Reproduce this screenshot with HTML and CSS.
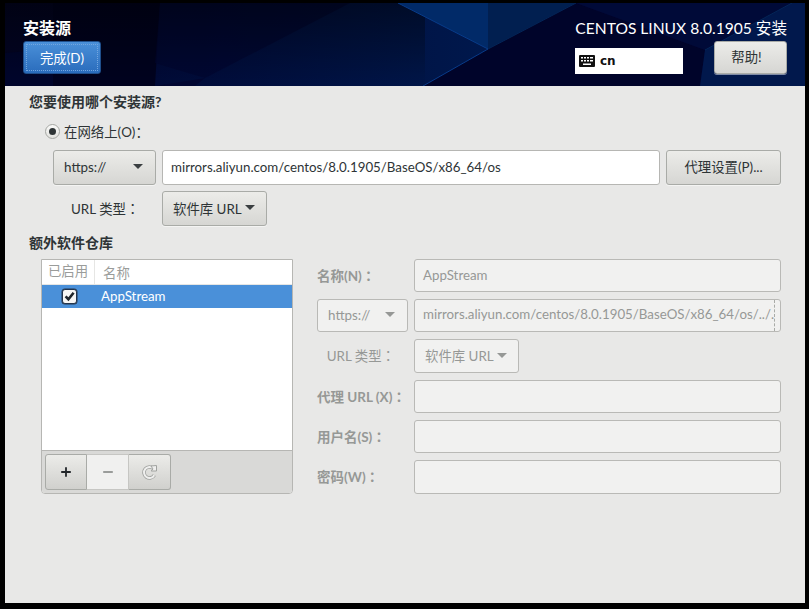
FILE: index.html
```html
<!DOCTYPE html>
<html lang="zh-CN">
<head>
<meta charset="utf-8">
<title>安装源</title>
<link rel="stylesheet" href="styles.css">
</head>
<body>
<div class="frame">
  <header class="topbar">
    <svg class="topbar-art" viewBox="0 0 800 83" preserveAspectRatio="none" aria-hidden="true">
      <defs>
        <linearGradient id="fade" x1="0" y1="0" x2="0" y2="1">
          <stop offset="0" stop-color="#000" stop-opacity=".45"/>
          <stop offset="1" stop-color="#000" stop-opacity="0"/>
        </linearGradient>
        <linearGradient id="mid" x1="0" y1="0" x2="1" y2="0">
          <stop offset="0" stop-color="#000a38"/>
          <stop offset="1" stop-color="#00184c"/>
        </linearGradient>
      </defs>
      <rect width="160" height="83" fill="#00052c"/>
      <polygon points="0,0 48,0 48,46 0,50" fill="#020424"/>
      <polygon points="48,0 155,0 180,40 150,83 48,83" fill="#00021f"/>
      <polygon points="155,0 393,0 483,46 418,83 190,83 200,75 150,83" fill="url(#mid)"/>
      <polygon points="155,0 345,0 200,75 150,60" fill="#000530" opacity=".7"/>
      <rect y="0" width="420" height="83" fill="url(#fade)"/>
      <polygon points="393,0 483,0 483,46" fill="#012a68"/>
      <polygon points="483,0 571,0 483,46" fill="#011f50"/>
      <polygon points="571,0 700,47 695,83 418,83 483,46" fill="#00042a"/>
      <polygon points="571,0 787,0 700,47" fill="#000a38"/>
      <polygon points="700,47 787,0 800,0 800,83 695,83" fill="#01184c"/>
      <path d="M393 0L483 46L418 83" fill="none" stroke="#083c8a" stroke-width="1"/>
      <path d="M483 46L571 0M700 47L787 0" fill="none" stroke="#042658" stroke-width="1"/>
    </svg>
    <div class="topbar-left">
      <h1 class="spoke-title">安装源</h1>
      <button class="btn-done"><span class="btn-done-inner">完成(D)</span></button>
    </div>
    <div class="topbar-right">
      <div class="product">CENTOS LINUX 8.0.1905 安装</div>
      <div class="topbar-controls">
        <div class="layout-box">
          <svg class="kbd-icon" viewBox="0 0 16 12" aria-hidden="true">
            <rect width="16" height="12" rx="1" fill="#111"/>
            <g fill="#fff">
              <rect x="2" y="2" width="2" height="1.5"/><rect x="5" y="2" width="2" height="1.5"/><rect x="8" y="2" width="2" height="1.5"/><rect x="11" y="2" width="3" height="1.5"/>
              <rect x="2" y="5" width="2" height="1.5"/><rect x="5" y="5" width="2" height="1.5"/><rect x="8" y="5" width="2" height="1.5"/><rect x="11" y="5" width="3" height="1.5"/>
              <rect x="4" y="8.5" width="8" height="1.5"/>
            </g>
          </svg>
          <span class="layout-name">cn</span>
        </div>
        <button class="btn btn-help">帮助!</button>
      </div>
    </div>
  </header>

  <main class="content">
    <h2 class="section-title section-first">您要使用哪个安装源?</h2>
    <label class="radio-row"><span class="radio"><span class="radio-dot"></span></span><span>在网络上(O)<span class="colon">：</span></span></label>

    <div class="url-row">
      <div class="btn select select-proto"><span>https://</span><span class="caret"></span></div>
      <div class="entry entry-url">mirrors.aliyun.com/centos/8.0.1905/BaseOS/x86_64/os</div>
      <button class="btn btn-proxy">代理设置(P)...</button>
    </div>

    <div class="type-row">
      <span class="type-label">URL 类型<span class="colon">：</span></span>
      <div class="btn select select-type"><span>软件库 URL</span><span class="caret"></span></div>
    </div>

    <h2 class="section-title section-repo">额外软件仓库</h2>

    <div class="repo-area">
      <div class="repo-panel">
        <div class="repo-list">
          <div class="repo-head"><span class="col-enabled">已启用</span><span class="col-name">名称</span></div>
          <div class="repo-row">
            <span class="col-check"><span class="check">
              <svg viewBox="0 0 13 13" aria-hidden="true"><path d="M2.6 6.4 L5.4 9.2 L10.6 2.8" fill="none" stroke="#20262c" stroke-width="2.6"/></svg>
            </span></span>
            <span class="repo-name">AppStream</span>
          </div>
        </div>
        <div class="repo-toolbar">
          <div class="tool-group">
            <button class="tool tool-add">
              <svg viewBox="0 0 12 12" aria-hidden="true"><path d="M6 1.2V10.8M1.2 6H10.8" stroke="#22262a" stroke-width="1.8" fill="none"/></svg>
            </button>
            <button class="tool tool-remove">
              <svg viewBox="0 0 12 12" aria-hidden="true"><path d="M1.2 6H10.8" stroke="#9a9c9a" stroke-width="1.8" fill="none"/></svg>
            </button>
            <button class="tool tool-refresh">
              <svg viewBox="0 0 16 16" aria-hidden="true">
                <path d="M11.4 4.6A5.5 5.5 0 1 0 12.3 11.2" fill="none" stroke="#a0a29f" stroke-width="3.6"/>
                <path d="M11.4 4.6A5.5 5.5 0 1 0 12.3 11.2" fill="none" stroke="#efefee" stroke-width="2"/>
                <path d="M9 2L14.5 1.5V7H9.2L11 5Z" fill="#efefee" stroke="#a0a29f" stroke-width="1"/>
              </svg>
            </button>
          </div>
        </div>
      </div>

      <div class="repo-form">
        <span class="form-label">名称(N)<span class="colon">：</span></span>
        <div class="entry entry-off">AppStream</div>

        <div class="btn select select-off select-proto-off"><span>https://</span><span class="caret caret-off"></span></div>
        <div class="entry entry-off entry-clip"><span class="clip-text">mirrors.aliyun.com/centos/8.0.1905/BaseOS/x86_64/os/../.</span></div>

        <span class="form-label form-type">URL 类型<span class="colon">：</span></span>
        <div class="type-cell"><div class="btn select select-off select-type-off"><span>软件库 URL</span><span class="caret caret-off"></span></div></div>

        <span class="form-label">代理 URL (X)<span class="colon">：</span></span>
        <div class="entry entry-off"></div>

        <span class="form-label">用户名(S)<span class="colon">：</span></span>
        <div class="entry entry-off"></div>

        <span class="form-label">密码(W)<span class="colon">：</span></span>
        <div class="entry entry-off"></div>
      </div>
    </div>
  </main>
</div>
</body>
</html>
```
FILE: styles.css
```css
* { box-sizing: border-box; }
html, body { margin: 0; padding: 0; height: 100%; background: #000; overflow: hidden; }
body {
  font-family: Lato, "Noto Sans CJK SC", sans-serif;
  font-size: 13.4px;
  color: #2e3436;
}
button { font: inherit; color: inherit; margin: 0; }
h1, h2 { margin: 0; }
.colon { font-family: "Noto Sans CJK TC", sans-serif; }

.frame {
  width: 800px;
  height: 600px;
  margin: 3px 0 0 5px;
  background: #e8e8e7;
  display: flex;
  flex-direction: column;
}

/* Header */
.topbar {
  position: relative;
  height: 83px;
  flex: none;
  background: #010632;
  display: flex;
  justify-content: space-between;
  padding: 15px 18px 0 18px;
  overflow: hidden;
}
.topbar-art { position: absolute; left: 0; top: 0; width: 100%; height: 100%; }
.topbar-left, .topbar-right { position: relative; }
.spoke-title {
  font-size: 16px;
  font-weight: 700;
  line-height: 20px;
  color: #fff;
  margin-bottom: 3px;
}
.btn-done {
  display: block;
  width: 78px;
  height: 33px;
  padding: 2px 2px;
  border: 1px solid #1f4f8c;
  border-radius: 3px;
  background: linear-gradient(#4a90d9, #2a6cbc);
  color: #fff;
}
.btn-done-inner {
  display: flex;
  align-items: center;
  justify-content: center;
  height: 100%;
  border: 1px dotted #74a6df;
  font-size: 13.4px;
  padding-bottom: 2px;
}
.topbar-right { width: 212px; display: flex; flex-direction: column; align-items: flex-end; }
.product {
  font-size: 15.6px;
  line-height: 20px;
  color: #fff;
  margin-bottom: 3px;
  white-space: nowrap;
}
.topbar-controls { display: flex; align-items: flex-start; gap: 31px; width: 212px; }
.layout-box {
  margin-top: 7px;
  width: 108px;
  height: 26px;
  background: #fff;
  display: flex;
  align-items: center;
  gap: 5px;
  padding-left: 4px;
  color: #111;
}
.kbd-icon { width: 16px; height: 12px; flex: none; }
.layout-name { font-size: 12px; font-weight: 700; font-family: "DejaVu Sans", sans-serif; }
.btn-help { width: 73px; height: 33px; padding: 0 8px 3px 0; }

/* Generic */
.btn {
  border: 1px solid #a9aba7;
  border-radius: 3px;
  background: linear-gradient(#ecece9, #d6d6d3);
  color: #2e3436;
  font-size: 13.4px;
  box-shadow: 0 1px 0 rgba(255,255,255,.5);
}
.select { display: flex; align-items: center; justify-content: space-between; }
.caret {
  width: 0;
  height: 0;
  border-left: 5px solid transparent;
  border-right: 5px solid transparent;
  border-top: 5px solid #3a3f41;
}
.entry {
  border: 1px solid #b6b6b3;
  border-radius: 3px;
  background: #fff;
  display: flex;
  align-items: center;
  padding: 0 8px 2px;
  font-size: 13.3px;
  white-space: nowrap;
}

/* Content */
.content { flex: 1; display: flex; flex-direction: column; padding: 0 24px; }
.section-title { font-size: 14px; font-weight: 700; line-height: 18px; color: #2e3436; }
.section-first { margin-top: 7px; }
.radio-row { display: flex; align-items: center; gap: 4px; margin: 11px 0 0 16px; height: 18px; line-height: 18px; }
.radio {
  width: 15px;
  height: 15px;
  border: 1px solid #a5a7a3;
  border-radius: 50%;
  background: linear-gradient(#fafaf9, #e2e2df);
  display: flex;
  align-items: center;
  justify-content: center;
}
.radio-dot { width: 7px; height: 7px; border-radius: 50%; background: #2e3436; }

.url-row { display: flex; gap: 6px; margin: 10px 0 0 24px; height: 35px; }
.select-proto { width: 103px; padding: 0 12px 2px 10px; }
.entry-url { width: 498px; }
.btn-proxy { width: 115px; padding: 0 0 3px; }

.type-row { display: flex; align-items: stretch; margin: 6px 0 0 42px; height: 35px; }
.type-label { width: 91px; display: flex; align-items: center; padding-bottom: 2px; }
.select-type { width: 105px; padding: 0 11px 2px 10px; }
.section-repo { margin-top: 8px; }

.repo-area { display: flex; margin: 7px 0 0 12px; gap: 24px; }
.repo-panel {
  width: 252px;
  height: 235px;
  border: 1px solid #b6b6b3;
  border-radius: 0 0 4px 4px;
  display: flex;
  flex-direction: column;
  background: #fff;
  overflow: hidden;
}
.repo-list { flex: 1; }
.repo-head {
  height: 25px;
  display: flex;
  align-items: center;
  color: #9a9c9a;
  border-bottom: 1px solid #e6e6e4;
}
.col-enabled { width: 53px; text-align: center; border-right: 1px solid #e6e6e4; height: 100%; line-height: 23px; white-space: nowrap; }
.col-name { padding: 0 0 1px 8px; }
.repo-row { height: 23px; background: #4a90d9; color: #fff; display: flex; align-items: center; font-size: 13.3px; }
.col-check { width: 54px; display: flex; justify-content: center; }
.check {
  width: 15px;
  height: 15px;
  border: 1px solid #22344c;
  border-radius: 3px;
  background: #f6f6f5;
  display: block;
  box-shadow: 0 0 0 .5px #22344c;
}
.check svg { display: block; width: 13px; height: 13px; }
.repo-name { padding: 0 0 2px 5px; }
.repo-toolbar {
  height: 43px;
  flex: none;
  border-top: 1px solid #b6b6b3;
  background: #d9d9d7;
  padding: 3px 3px;
}
.tool-group { display: flex; width: 126px; height: 36px; }
.tool {
  width: 42px;
  height: 36px;
  padding: 0;
  border: 1px solid #a9aba7;
  border-left-width: 0;
  background: linear-gradient(#ecece9, #d0d0cd);
  display: flex;
  align-items: center;
  justify-content: center;
}
.tool svg { width: 12px; height: 12px; }
.tool-add { border-left-width: 1px; border-radius: 3px 0 0 3px; }
.tool-remove { background: #f0f0ef; border-color: #c6c6c3; }
.tool-refresh { border-radius: 0 3px 3px 0; }
.tool-refresh svg { width: 16px; height: 16px; }

.repo-form {
  width: 464px;
  display: grid;
  grid-template-columns: 91px 367px;
  column-gap: 6px;
  grid-template-rows: 33px 33px 34px 33px 33px 34px;
  row-gap: 7px;
  align-items: stretch;
  color: #969896;
}
.form-label { display: flex; align-items: center; font-size: 13.5px; font-weight: 700; white-space: nowrap; padding-bottom: 2px; }
.form-type { justify-content: flex-end; font-size: 13.4px; font-weight: 400; padding-right: 13px; }
.entry-off { background: #f1f1f0; color: #969896; border-color: #b9b9b6; }
.entry-clip { padding: 0 9px 0 8px; }
.clip-text { display: block; flex: 1; border-right: 1px dashed #a9aba7; height: 100%; line-height: 29px; }
.select-off { background: #f1f1f0; color: #969896; border-color: #b9b9b6; box-shadow: none; }
.caret-off { border-top-color: #969896; }
.select-proto-off { width: 91px; padding: 0 12px 2px 10px; }
.type-cell { display: flex; }
.select-type-off { width: 105px; padding: 0 11px 2px 10px; }
```
